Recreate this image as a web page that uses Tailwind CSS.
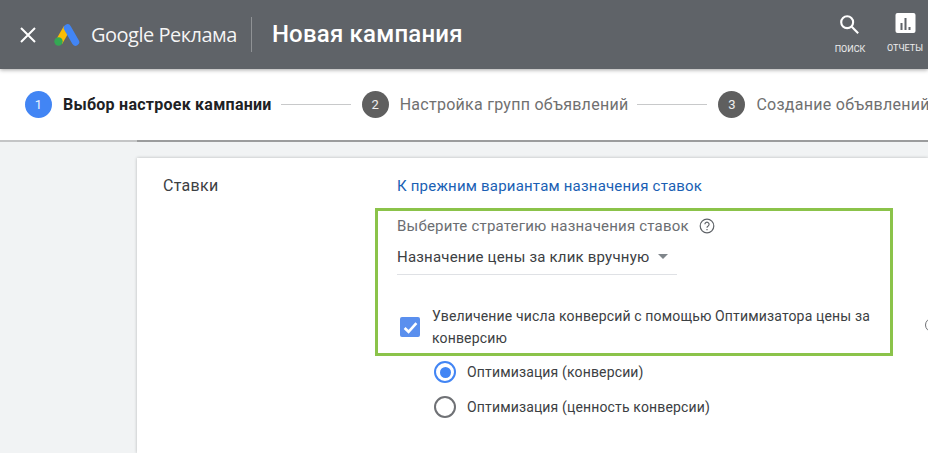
<!DOCTYPE html>
<html lang="ru">
<head>
  <meta charset="UTF-8" />
  <title>Новая кампания</title>
  <script src="https://cdn.jsdelivr.net/npm/@tailwindcss/browser@4"></script>
</head>
<body class="h-[453px] w-[928px] overflow-hidden bg-[#f1f3f4] font-['Roboto',sans-serif]">
  <header class="relative z-10 flex h-[69px] items-center bg-[#5f6368] text-white shadow-[0_1px_4px_rgba(0,0,0,0.35)]">
    <svg class="ml-[20px] h-[16px] w-[16px]" viewBox="0 0 16 16" fill="none" stroke="#fff" stroke-width="2"><path d="M1 1l14 14M15 1L1 15"/></svg>
    <svg class="ml-[18px] h-[24px] w-[26px]" viewBox="0 0 26 24" fill="none" stroke-width="7.500">
      <path d="M13 5L5 19" stroke="#fbbc04"/>
      <circle cx="4.500" cy="18.500" r="4.200" fill="#34a853" stroke="none"/>
      <path d="M13.500 5l8 14" stroke="#4285f4" stroke-linecap="round"/>
    </svg>
    <span class="ml-[11px] font-['Open_Sans',sans-serif] text-[20px] tracking-[-0.5px] text-white/95">Google Реклама</span>
    <div class="ml-[14px] h-[35px] w-px bg-white/30"></div>
    <h1 class="mb-[2px] ml-[20px] text-[24px] font-medium tracking-[0.2px]">Новая кампания</h1>
    <div class="ml-auto flex items-start">
      <div class="flex w-[32px] flex-col items-center">
        <svg class="-ml-[2px] h-[22px] w-[22px]" viewBox="0 0 24 24" fill="none" stroke="#fff" stroke-width="2.300"><circle cx="10" cy="10" r="6.500"/><path d="M15 15l7 7"/></svg>
        <span class="mt-[7px] text-[9px] leading-[14px] text-white/90">ПОИСК</span>
      </div>
      <div class="ml-[21px] mr-[5px] flex w-[36px] flex-col items-center">
        <svg class="h-[21px] w-[21px]" viewBox="0 0 21 21"><rect width="20" height="20" x="0.500" rx="2" fill="#fff"/><path d="M5.500 10h2v7h-2zM9.500 5h2v12h-2zM13.500 14h2v3h-2z" fill="#5f6368"/></svg>
        <span class="mt-[7px] text-[9px] leading-[14px] text-white/90">ОТЧЕТЫ</span>
      </div>
    </div>
  </header>

  <nav class="flex h-[71px] items-center overflow-hidden whitespace-nowrap bg-white pl-[25px]">
    <span class="flex h-[27px] w-[27px] shrink-0 items-center justify-center rounded-full bg-[#4285f4] text-[13px] text-white/90">1</span>
    <span class="ml-[11px] text-[16px] font-bold tracking-[0.25px] text-[#202124]">Выбор настроек кампании</span>
    <span class="ml-[9px] h-px w-[70px] shrink-0 bg-[#c8c9ca]"></span>
    <span class="ml-[11px] flex h-[27px] w-[27px] shrink-0 items-center justify-center rounded-full bg-[#5f5f5f] text-[13px] text-white/90">2</span>
    <span class="ml-[11px] text-[16px] tracking-[0.27px] text-[#707070]">Настройка групп объявлений</span>
    <span class="ml-[9px] h-px w-[70px] shrink-0 bg-[#c8c9ca]"></span>
    <span class="ml-[11px] flex h-[27px] w-[27px] shrink-0 items-center justify-center rounded-full bg-[#5f5f5f] text-[13px] text-white/90">3</span>
    <span class="ml-[11px] text-[16px] tracking-[0.27px] text-[#707070]">Создание объявлений</span>
  </nav>
  <div class="flex h-[2px]">
    <div class="w-[137px] bg-[#c4c5c6]"></div>
    <div class="flex-1 bg-[#9b9c9d]"></div>
  </div>

  <main class="relative ml-[137px] mt-[16px] h-[295px] bg-white pl-[26px] pt-[18px] shadow-[0_0_3px_rgba(0,0,0,0.25)]">
    <div class="flex">
      <h2 class="w-[234px] text-[16px] leading-[20px] tracking-[0.3px] text-[#3c4043]">Ставки</h2>
      <div class="flex-1">
        <a class="block text-[15px] leading-[20px] tracking-[0.2px] text-[#1a5fb4]" href="#">К прежним вариантам назначения ставок</a>

        <div class="mt-[20px] flex items-center">
          <span class="text-[15px] leading-[20px] tracking-[0.2px] text-[#6b6e72]">Выберите стратегию назначения ставок</span>
          <svg class="ml-[10px] h-[16px] w-[16px]" viewBox="0 0 16 16" fill="none" stroke="#5f6368" stroke-width="1.200"><circle cx="8" cy="8" r="6.800"/><path d="M5.900 6.300a2.100 2.100 0 1 1 3.300 1.700c-.8.500-1.200.9-1.200 1.800M8 11v1.200"/></svg>
        </div>

        <div class="mt-[11px] flex h-[28px] w-[280px] items-start border-b border-[#dfe1e5]">
          <span class="text-[15px] leading-[20px] tracking-[0.2px] text-[#3c4043]">Назначение цены за клик вручную</span>
          <span class="ml-[9px] mt-[7px] h-0 w-0 border-x-[5px] border-t-[5px] border-x-transparent border-t-[#80868b]"></span>
        </div>

        <div class="mt-[30px] flex items-start">
          <span class="ml-[3px] mt-[12px] flex h-[20px] w-[20px] shrink-0 items-center justify-center rounded-[2px] bg-[#5a8fee]">
            <svg class="h-[15px] w-[15px]" viewBox="0 0 14 14" fill="none" stroke="#fff" stroke-width="2.500"><path d="M1.500 7.500l3.700 3.500 7.300-8"/></svg>
          </span>
          <p class="ml-[12px] w-[450px] text-[14px] leading-[22px] tracking-[0.15px] text-[#3c4043]">Увеличение числа конверсий с помощью Оптимизатора цены за конверсию</p>
        </div>

        <div class="ml-[37px] mt-[12px] flex items-center">
          <span class="flex h-[22px] w-[22px] items-center justify-center rounded-full border-[2.500px] border-[#4285f4]">
            <span class="h-[11px] w-[11px] rounded-full bg-[#4285f4]"></span>
          </span>
          <span class="ml-[11px] text-[14px] leading-[20px] tracking-[0.15px] text-[#3c4043]">Оптимизация (конверсии)</span>
        </div>
        <div class="ml-[37px] mt-[13px] flex items-center">
          <span class="h-[22px] w-[22px] rounded-full border-[2.500px] border-[#6f7175]"></span>
          <span class="ml-[11px] text-[14px] leading-[20px] tracking-[0.15px] text-[#3c4043]">Оптимизация (ценность конверсии)</span>
        </div>
      </div>
    </div>
    <!-- annotation frame drawn over the form -->
    <div class="absolute left-[238px] top-[50px] h-[148px] w-[518px] border-[3px] border-[#8bc34a]"></div>
    <div class="absolute left-[788px] top-[160px] h-[14px] w-[14px] rounded-full border-[1.500px] border-[#6f7175]"></div>
  </main>
</body>
</html>
